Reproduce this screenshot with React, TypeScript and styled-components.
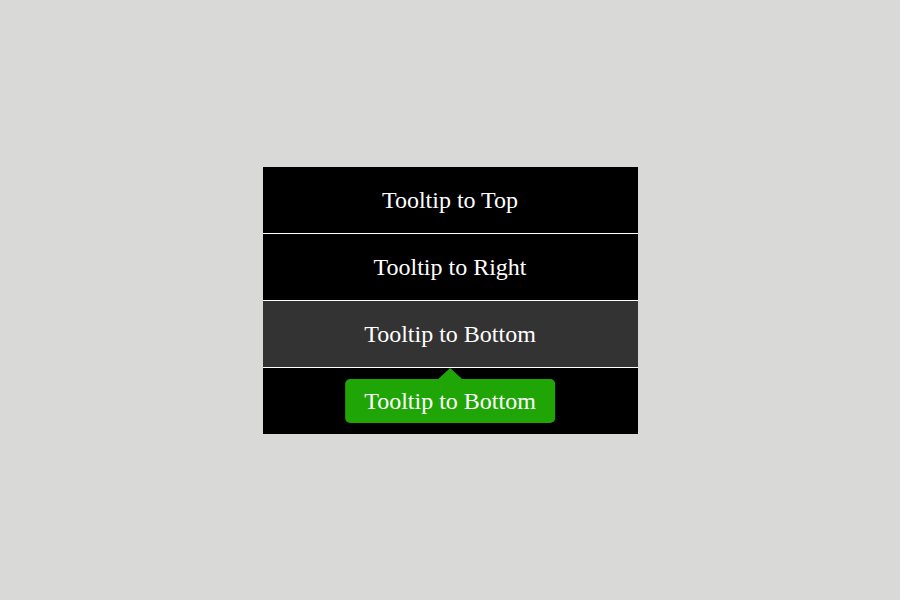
import React from "react";
import styled, { createGlobalStyle } from "styled-components";

const GlobalStyle = createGlobalStyle`
  html, body {
    margin: 0;
    padding: 0;
    background: #d9d9d8;
  }
`;

const Page = styled.div`
  width: 900px;
  height: 600px;
  display: flex;
  align-items: center;
  justify-content: center;
  font-family: "Liberation Serif", "Times New Roman", serif;
`;

const List = styled.ul`
  list-style: none;
  margin: 0;
  padding: 0;
  width: 375px;
  display: flex;
  flex-direction: column;
  gap: 1px;
  background: #ffffff;
`;

const Item = styled.li<{ $active?: boolean }>`
  position: relative;
  box-sizing: border-box;
  height: 66px;
  padding-top: 2px;
  display: flex;
  align-items: center;
  justify-content: center;
  background: ${(p) => (p.$active ? "#333333" : "#000000")};
  color: #ffffff;
  font-size: 24px;
`;

const Tooltip = styled.span`
  position: absolute;
  top: calc(100% + 12px);
  left: 50%;
  transform: translateX(-50%);
  z-index: 2;
  white-space: nowrap;
  background: #1fa606;
  color: #ffffff;
  font-size: 24px;
  line-height: 28px;
  padding: 8px 19px;
  border-radius: 5px;

  &::before {
    content: "";
    position: absolute;
    bottom: 100%;
    left: 50%;
    transform: translateX(-50%);
    border-left: 12px solid transparent;
    border-right: 12px solid transparent;
    border-bottom: 11px solid #1fa606;
  }
`;

const items = [
  { label: "Tooltip to Top" },
  { label: "Tooltip to Right" },
  { label: "Tooltip to Bottom", tip: "Tooltip to Bottom", active: true },
  { label: "" },
];

export default function App() {
  return (
    <>
      <GlobalStyle />
      <Page>
        <List>
          {items.map((it, i) => (
            <Item key={i} $active={it.active}>
              {it.label}
              {it.tip && <Tooltip>{it.tip}</Tooltip>}
            </Item>
          ))}
        </List>
      </Page>
    </>
  );
}
